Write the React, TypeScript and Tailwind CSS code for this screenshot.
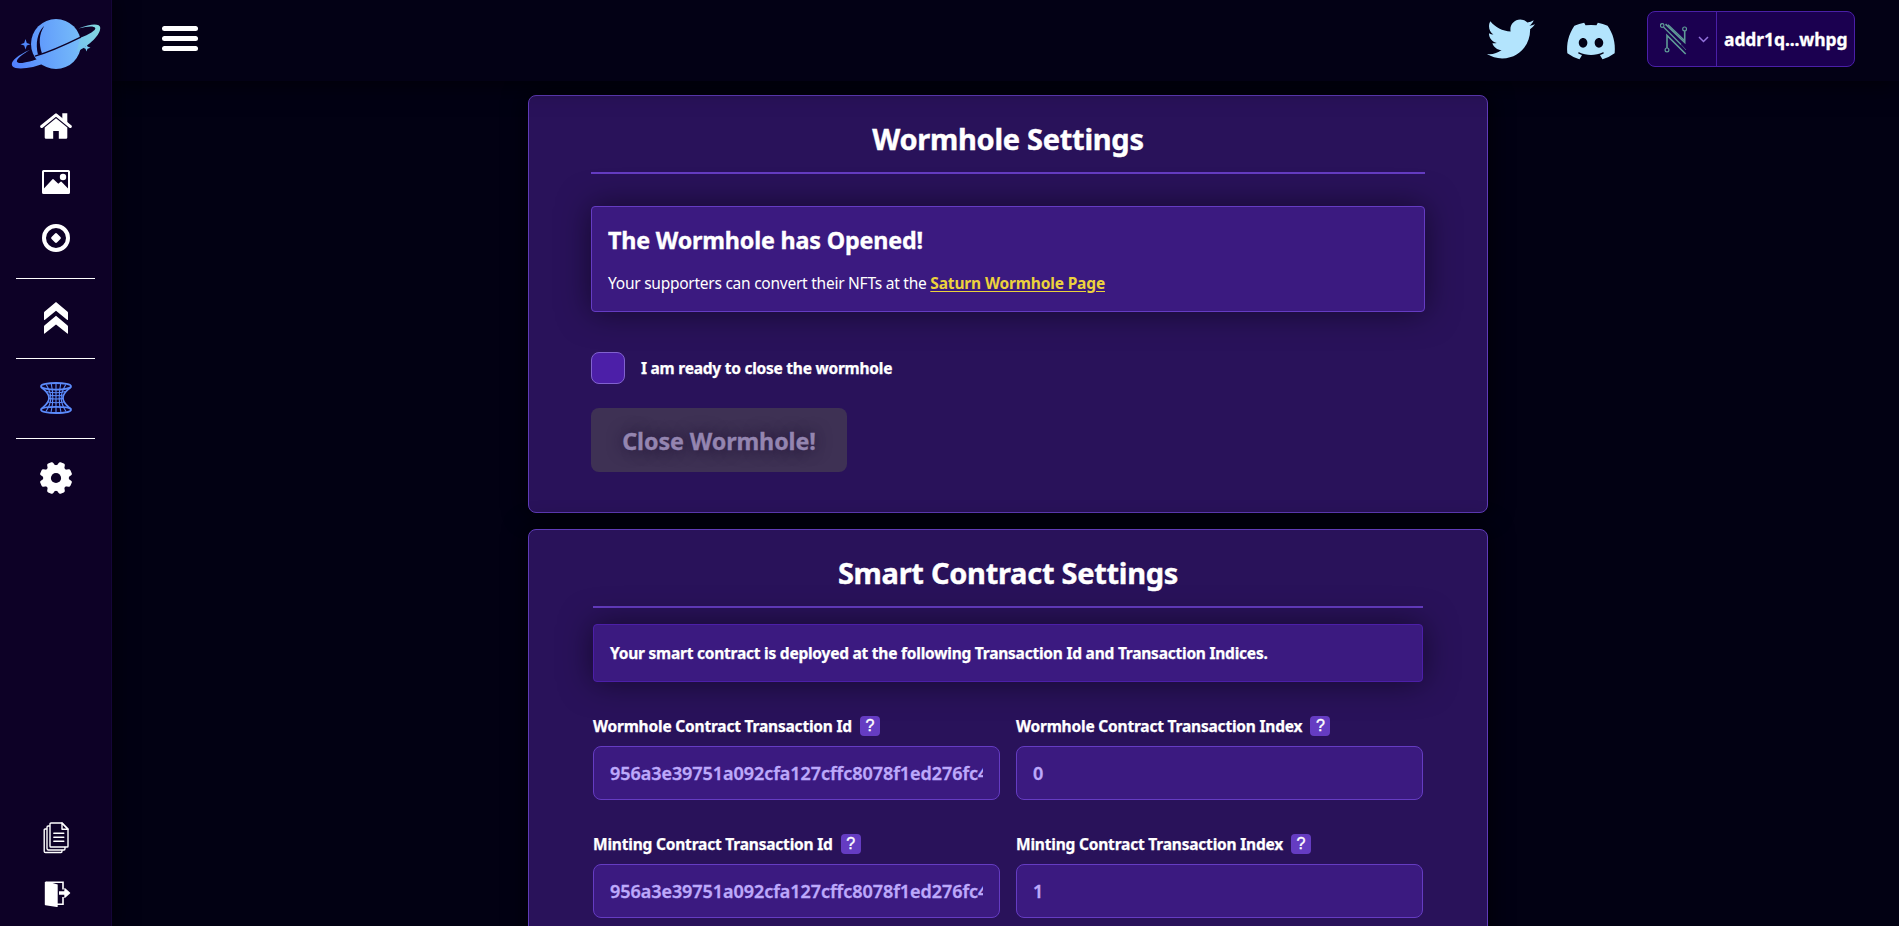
import type { ReactNode } from "react";
import { FaDiscord, FaTwitter } from "react-icons/fa";

function PlanetLogo() {
  return (
    <svg className="h-[56px] w-[92px]" viewBox="0 0 92 56" fill="none">
      <defs>
        <linearGradient id="ring" x1="0" y1="50" x2="92" y2="8" gradientUnits="userSpaceOnUse">
          <stop offset="0" stopColor="#4f7cff" />
          <stop offset="0.5" stopColor="#6fb4fb" />
          <stop offset="1" stopColor="#84dcdc" />
        </linearGradient>
        <linearGradient id="globe" x1="22" y1="30" x2="72" y2="26" gradientUnits="userSpaceOnUse">
          <stop offset="0" stopColor="#5d95fc" />
          <stop offset="1" stopColor="#77bdf9" />
        </linearGradient>
      </defs>
      <circle cx="46" cy="28" r="25" fill="url(#globe)" />
      <path d="M33.500 10.500C27.500 17 25.200 27 28 38.800L32 37.400C28.600 27 29 18.500 34 10.200Z" fill="#0d0126" />
      <path
        d="M20 33.700C5 40.5-.2 46.500 2.500 50.200C6 54.500 24 52 35.500 46.700L31.500 41.500C20 46 8.500 48.700 7 45.800C6 43.500 11.500 38.800 20 33.700Z"
        fill="url(#ring)"
      />
      <path
        d="M68.500 12.500C82 7 90 7.800 90.200 11.500C91 18.500 79.500 29.500 66.500 36L70.300 21.800C79 18.500 86.500 14 85.200 12C84 9.800 78 10 68.500 12.500Z"
        fill="url(#ring)"
      />
      <path d="M25 40.200C38 36.500 54 29.500 70.800 21.200" stroke="#0d0126" strokeWidth="1.300" />
      <path d="M15.500 23L16.800 27L20.500 28.200L16.800 29.500L15.500 33.500L14.200 29.500L10.500 28.200L14.200 27Z" fill="#4f86fb" />
      <path d="M76.500 28L77.500 30.600L80.500 31.700L77.500 32.800L76.500 35.500L75.500 32.800L73 31.700L75.500 30.600Z" fill="#79c9ee" />
    </svg>
  );
}

function Icon({ children, className = "text-white" }: { children: ReactNode; className?: string }) {
  return (
    <svg className={`size-8 shrink-0 ${className}`} viewBox="0 0 32 32" fill="none" stroke="none">
      {children}
    </svg>
  );
}

function HomeIcon() {
  return (
    <Icon>
      <path d="M1.700 16.500L16 4.900L30.300 16.500" stroke="currentColor" strokeWidth="3" strokeLinecap="round" strokeLinejoin="round" />
      <path d="M22.300 3.300H27.300V13.500L22.300 9.500Z" fill="currentColor" />
      <path d="M16 8.200L27.300 17.500V27.500Q27.300 28.800 26 28.800H18.800V21H13.200V28.800H6Q4.700 28.800 4.700 27.500V17.500Z" fill="currentColor" />
    </Icon>
  );
}

function PictureIcon() {
  return (
    <Icon>
      <rect x="3" y="5" width="26" height="22" rx="0.6" stroke="currentColor" strokeWidth="2" />
      <circle cx="23" cy="11" r="3.200" fill="currentColor" />
      <path d="M3 23.500L12.500 13.200Q13 12.700 13.500 13.200L18.300 17.800L20.600 15.700Q21 15.400 21.500 15.700L29 23.500V27H3Z" fill="currentColor" />
    </Icon>
  );
}

function TokenIcon() {
  return (
    <Icon>
      <circle cx="16" cy="16" r="12" stroke="currentColor" strokeWidth="4" />
      <path d="M14.800 11.800Q16 10.200 17.200 11.800L20.200 14.800Q21.800 16 20.200 17.200L17.200 20.200Q16 21.800 14.800 20.200L11.800 17.200Q10.200 16 11.800 14.800Z" fill="currentColor" />
    </Icon>
  );
}

function UpgradeIcon() {
  const chevron = "M16 0L27.600 9.800Q28 10.200 28 10.800V17.600Q28 18.400 27.300 17.900L16 8.800L4.700 17.900Q4 18.400 4 17.600V10.800Q4 10.200 4.400 9.800Z";
  return (
    <Icon>
      <path d={chevron} fill="currentColor" />
      <path d={chevron} transform="translate(0 13.700)" fill="currentColor" />
    </Icon>
  );
}

function WormholeIcon() {
  return (
    <Icon className="text-[#5b8bfb]">
      <g stroke="currentColor">
        <ellipse cx="16" cy="4.300" rx="15" ry="3.300" strokeWidth="1.800" />
        <path d="M1 4.800C4.500 8.500 9 10.500 9 16S4.500 23.500 1 27.200" strokeWidth="1.700" />
        <path d="M31 4.800C27.500 8.500 23 10.500 23 16S27.500 23.500 31 27.200" strokeWidth="1.700" />
        <path d="M1 27.700C1 25.500 8 24.800 16 24.800S31 25.500 31 27.700C31 29.800 24 31 16 31S1 29.800 1 27.700Z" strokeWidth="1.800" />
        <path d="M16 1V31M11.300 1.500C12.500 8 12.800 11 12.800 16S12.500 24 11 30.500M20.700 1.500C19.500 8 19.200 11 19.200 16S19.500 24 21 30.500M6.200 2.500C9.500 8 10.800 11 10.800 16S9.500 24 6 29.500M25.800 2.500C22.500 8 21.200 11 21.200 16S22.500 24 26 29.500" strokeWidth="1.100" />
        <path d="M6.500 9.500Q16 12 25.500 9.500M8.500 13Q16 14.500 23.500 13M8.700 16.500Q16 17.500 23.300 16.500M8 20Q16 21.500 24 20" strokeWidth="1.100" />
      </g>
    </Icon>
  );
}

function GearIcon() {
  return (
    <Icon>
      <mask id="gear-hole">
        <rect width="32" height="32" fill="white" />
        <circle cx="16" cy="16" r="5.100" fill="black" />
      </mask>
      <g fill="currentColor" mask="url(#gear-hole)">
        <circle cx="16" cy="16" r="12.900" />
        {[22.5, 67.5, 112.5, 157.5].map((angle) => (
          <path
            key={angle}
            transform={`rotate(${angle} 16 16)`}
            d="M14.300-.3H17.700Q19 -.3 19.300 1L20.500 6V26L19.300 31Q19 32.300 17.700 32.300H14.300Q13 32.300 12.700 31L11.500 26V6L12.700 1Q13-.3 14.300-.3Z"
          />
        ))}
      </g>
    </Icon>
  );
}

function DocsIcon() {
  return (
    <Icon>
      <g stroke="currentColor" strokeWidth="1.400" strokeLinejoin="round" strokeLinecap="round">
        <path d="M11 1H22L28 7V24.200Q28 25 27.200 25H10.800Q10 25 10 24.200V2Q10 1 11 1Z" />
        <path d="M22 1V7.300H28Z" />
        <path d="M9.500 4H8.200Q7 4 7 5.200V26.500Q7 28 8.500 28H24Q25 28 25 26.500V25.500" />
        <path d="M6.500 7H5.200Q4.200 7 4.200 8.200V29.200Q4.200 30.500 5.500 30.500H21Q22 30.500 22 29V28.500" />
        <path d="M13.800 11.200H23.800M13.800 15.300H23.800M13.800 19.300H23.800" />
      </g>
    </Icon>
  );
}

function ExitIcon() {
  return (
    <Icon>
      <path d="M5.500 3.700Q4.800 3.700 4.800 4.500V26.500Q4.800 27.100 5.400 27.300L16.800 29.100Q17.700 29.200 17.700 28.400V6.500L10 4.200" fill="currentColor" />
      <path d="M5.800 4.200H23V11.500M23 19V26.200H17" stroke="currentColor" strokeWidth="1.600" />
      <path d="M19 13.300H24.300V10.500Q24.500 9.600 25.200 10.200L30 14.500Q30.500 15 30 15.500L25.200 19.800Q24.500 20.400 24.300 19.500V16.700H19Z" fill="currentColor" />
    </Icon>
  );
}

function Rule() {
  return <div className="my-6 ml-4 h-px w-[79px] bg-white" />;
}

function NamiLogo() {
  return (
    <svg className="h-8 w-7" viewBox="0 0 28 32" fill="none" stroke="#5f9a97" strokeWidth="1.200">
      <path d="M5.500 1.200L24.700 19.500V8M7 25V12.500L25.700 31" strokeWidth="1.600" />
      <path d="M8 1.800L24.500 17.500" strokeWidth="1.400" />
      <path d="M3.500 4L21 21.500" strokeWidth="1.300" />
      <path d="M21 21.500L26 27" strokeWidth="0.600" />
      <circle cx="2.200" cy="2.500" r="1.800" />
      <circle cx="24.600" cy="5.900" r="1.900" />
      <circle cx="7" cy="26.900" r="1.900" />
    </svg>
  );
}

function Card({ title, inset, className, children }: { title: string; inset: string; className: string; children: ReactNode }) {
  return (
    <section className={`w-[960px] rounded-lg border border-[#5f3bb8] bg-[#29125a] shadow-[0_0_24px_rgba(0,0,0,0.8)] ${inset} ${className}`}>
      <h2 className="border-b-2 border-[#653cc2] pt-[25px] pb-[15px] text-center text-[29px] leading-9 font-bold tracking-[-0.28px] [-webkit-text-stroke:0.4px_white]">
        {title}
      </h2>
      {children}
    </section>
  );
}

function Field({ label, value }: { label: string; value: string }) {
  return (
    <div className="min-w-0 flex-1">
      <div className="flex h-5 items-center gap-2">
        <label className="text-[15.500px] leading-5 font-bold tracking-[-0.2px] whitespace-nowrap [-webkit-text-stroke:0.25px_white]">{label}</label>
        <span className="flex size-5 items-center justify-center rounded bg-[#653cc2] font-['Liberation_Sans',sans-serif] text-base leading-5 text-white [-webkit-text-stroke:0.4px_white]">
          ?
        </span>
      </div>
      <div className="mt-2.5 h-[54px] rounded-lg border border-[#653cc2] bg-[#3b1a80] px-4">
        <p className="overflow-hidden text-lg leading-[52px] font-semibold tracking-[-0.06px] whitespace-nowrap text-[#bda9fb] [-webkit-text-stroke:0.35px_#bda9fb]">{value}</p>
      </div>
    </div>
  );
}

const TX_ID = "956a3e39751a092cfa127cffc8078f1ed276fc4d";

export default function App() {
  return (
    <div className="flex h-screen overflow-hidden bg-[#020113] font-['Noto_Sans',sans-serif] text-white">
      <aside className="relative z-20 flex w-28 shrink-0 flex-col border-r border-[#150538] bg-[#0d0126] shadow-[0_0_20px_rgba(0,0,0,0.7)]">
        <div className="mt-4 ml-2.5 h-[94px]">
          <PlanetLogo />
        </div>
        <nav className="flex flex-1 flex-col">
          <div className="flex flex-col items-center gap-6">
            <HomeIcon />
            <PictureIcon />
            <TokenIcon />
          </div>
          <Rule />
          <div className="-mt-px flex justify-center"><UpgradeIcon /></div>
          <Rule />
          <div className="-mt-px flex justify-center"><WormholeIcon /></div>
          <Rule />
          <div className="-mt-px flex justify-center"><GearIcon /></div>
          <div className="mt-auto mb-4 flex flex-col items-center gap-6">
            <DocsIcon />
            <ExitIcon />
          </div>
        </nav>
      </aside>

      <div className="flex min-w-0 flex-1 flex-col">
        <header className="relative z-10 flex h-[81px] shrink-0 items-start bg-[#030115] pr-11 pl-[50px] shadow-[0_0_24px_rgba(0,0,0,0.8)]">
          <div className="mt-[26px] flex w-9 flex-col gap-[5px]">
            <div className="h-[5px] rounded-sm bg-white" />
            <div className="h-[5px] rounded-sm bg-white" />
            <div className="h-[5px] rounded-sm bg-white" />
          </div>
          <FaTwitter className="mt-[15px] ml-auto size-12 text-[#b3e4fd]" />
          <FaDiscord className="mt-[15px] ml-[30px] size-[52px] text-[#b3e4fd]" />
          <div className="mt-[11px] ml-[30px] flex h-14 w-52 overflow-hidden rounded-lg border border-[#4a1fa8] bg-[#1b0050]">
            <div className="flex w-[69px] items-center border-r border-[#4a1fa8] pl-3">
              <NamiLogo />
              <svg className="ml-2.5 h-[7px] w-[11px]" viewBox="0 0 11 7" fill="none" stroke="#9473dd" strokeWidth="1.500">
                <path d="M1 1L5.500 5.500L10 1" />
              </svg>
            </div>
            <p className="flex flex-1 items-center pl-[7px] text-[17.500px] font-bold tracking-[-0.1px] [-webkit-text-stroke:0.3px_white]">addr1q...whpg</p>
          </div>
        </header>

        <main className="flex flex-col items-center pr-[2px] pl-[7px]">
          <Card title="Wormhole Settings" inset="px-[62px]" className="mt-3.5 pb-10">
            <div className="mt-8 rounded border border-[#653cc2] bg-[#3b1a80] px-4 pt-[17px] pb-4 shadow-[0_0_32px_rgba(0,0,0,0.5)]">
              <h3 className="text-[23.300px] leading-8 font-bold tracking-[-0.18px] [-webkit-text-stroke:0.35px_white]">The Wormhole has Opened!</h3>
              <p className="mt-[15px] text-[15.500px] leading-6 tracking-[-0.25px]">
                Your supporters can convert their NFTs at the{" "}
                <a className="font-bold tracking-[-0.15px] text-[#ecd23c] underline underline-offset-2">Saturn Wormhole Page</a>
              </p>
            </div>
            <div className="mt-10 flex items-center gap-4">
              <div className="h-8 w-[34px] rounded-lg border border-[#8162cf] bg-[#4c1fa8]" />
              <span className="text-[15.500px] leading-8 font-bold tracking-[-0.24px] [-webkit-text-stroke:0.25px_white]">I am ready to close the wormhole</span>
            </div>
            <div className="mt-6 flex h-16 w-64 items-center justify-center rounded-lg bg-[#3e3154] pt-0.5 text-[23.300px] font-bold tracking-[-0.1px] text-[#9485b0] [-webkit-text-stroke:0.35px_#9485b0] [text-shadow:0_0_16px_rgba(20,5,40,0.8)]">
              Close Wormhole!
            </div>
          </Card>

          <Card title="Smart Contract Settings" inset="px-16" className="mt-4 h-[600px]">
            <div className="mt-4 flex h-[58px] items-center rounded border border-[#4c1fa8] bg-[#3b1a80] px-4 shadow-[0_0_32px_rgba(0,0,0,0.5)]">
              <p className="text-[15.500px] leading-6 font-bold tracking-[-0.23px] [-webkit-text-stroke:0.25px_white]">
                Your smart contract is deployed at the following Transaction Id and Transaction Indices.
              </p>
            </div>
            <div className="mt-[34px] flex gap-4">
              <Field label="Wormhole Contract Transaction Id" value={TX_ID} />
              <Field label="Wormhole Contract Transaction Index" value="0" />
            </div>
            <div className="mt-[34px] flex gap-4">
              <Field label="Minting Contract Transaction Id" value={TX_ID} />
              <Field label="Minting Contract Transaction Index" value="1" />
            </div>
          </Card>
        </main>
      </div>
    </div>
  );
}
